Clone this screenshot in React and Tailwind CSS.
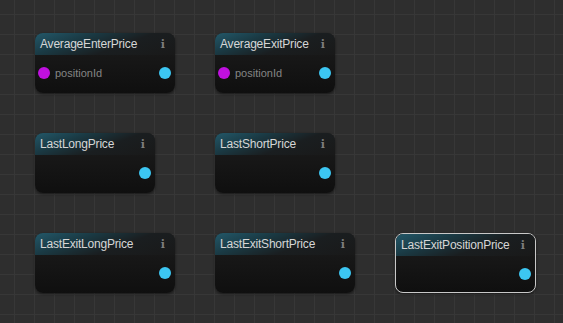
const nodes = [
    { title: 'AverageEnterPrice', x: 35, y: 33, w: 140, input: 'positionId' },
    { title: 'AverageExitPrice', x: 215, y: 33, w: 120, input: 'positionId' },
    { title: 'LastLongPrice', x: 35, y: 133, w: 120 },
    { title: 'LastShortPrice', x: 215, y: 133, w: 120 },
    { title: 'LastExitLongPrice', x: 35, y: 233, w: 140 },
    { title: 'LastExitShortPrice', x: 215, y: 233, w: 140 },
    { title: 'LastExitPositionPrice', x: 395, y: 233, w: 141, selected: true },
]

function Node({ node }) {
    return (
        <div
            className={`absolute h-[60px] rounded-[8px] overflow-hidden bg-gradient-to-b from-[#1d1d1d] to-[#0f0f0f] shadow-[0_1px_3px_rgba(0,0,0,0.5)] ${node.selected ? 'border border-[#c8c8c8]' : ''}`}
            style={{ left: node.x, top: node.y, width: node.w }}
        >
            <div className="h-[22px] flex items-center justify-between pl-[5px] pr-[10px] bg-[linear-gradient(160deg,#235869_0%,#1a3a44_30%,#1a1e20_60%,#191919_100%)]">
                <span className="text-[12px] tracking-[-0.2px] text-[#d6d6d6] leading-none">{node.title}</span>
                <span className="text-[11px] font-bold text-[#7e7e7e] font-['DejaVu_Serif',serif] leading-none">i</span>
            </div>
            <div className="flex items-center justify-between pl-[3px] pr-[4px] h-[36px]">
                {node.input ? (
                    <div className="flex items-center gap-[5px]">
                        <span className="w-[12px] h-[12px] rounded-full bg-[#c010e0]" />
                        <span className="text-[11px] text-[#858585]">{node.input}</span>
                    </div>
                ) : <span />}
                <span className="w-[12px] h-[12px] rounded-full bg-[#3cc6f2]" />
            </div>
        </div>
    )
}

export default function App() {
    return (
        <div
            className="relative w-[563px] h-[323px] overflow-hidden bg-[#2e2e2e] font-['Liberation_Sans',Arial,sans-serif] bg-[linear-gradient(to_right,#373737_1px,transparent_1px),linear-gradient(to_bottom,#373737_1px,transparent_1px)] bg-[size:20px_20px] bg-[position:14px_14px]"
        >
            {nodes.map(n => <Node key={n.title} node={n} />)}
        </div>
    )
}
